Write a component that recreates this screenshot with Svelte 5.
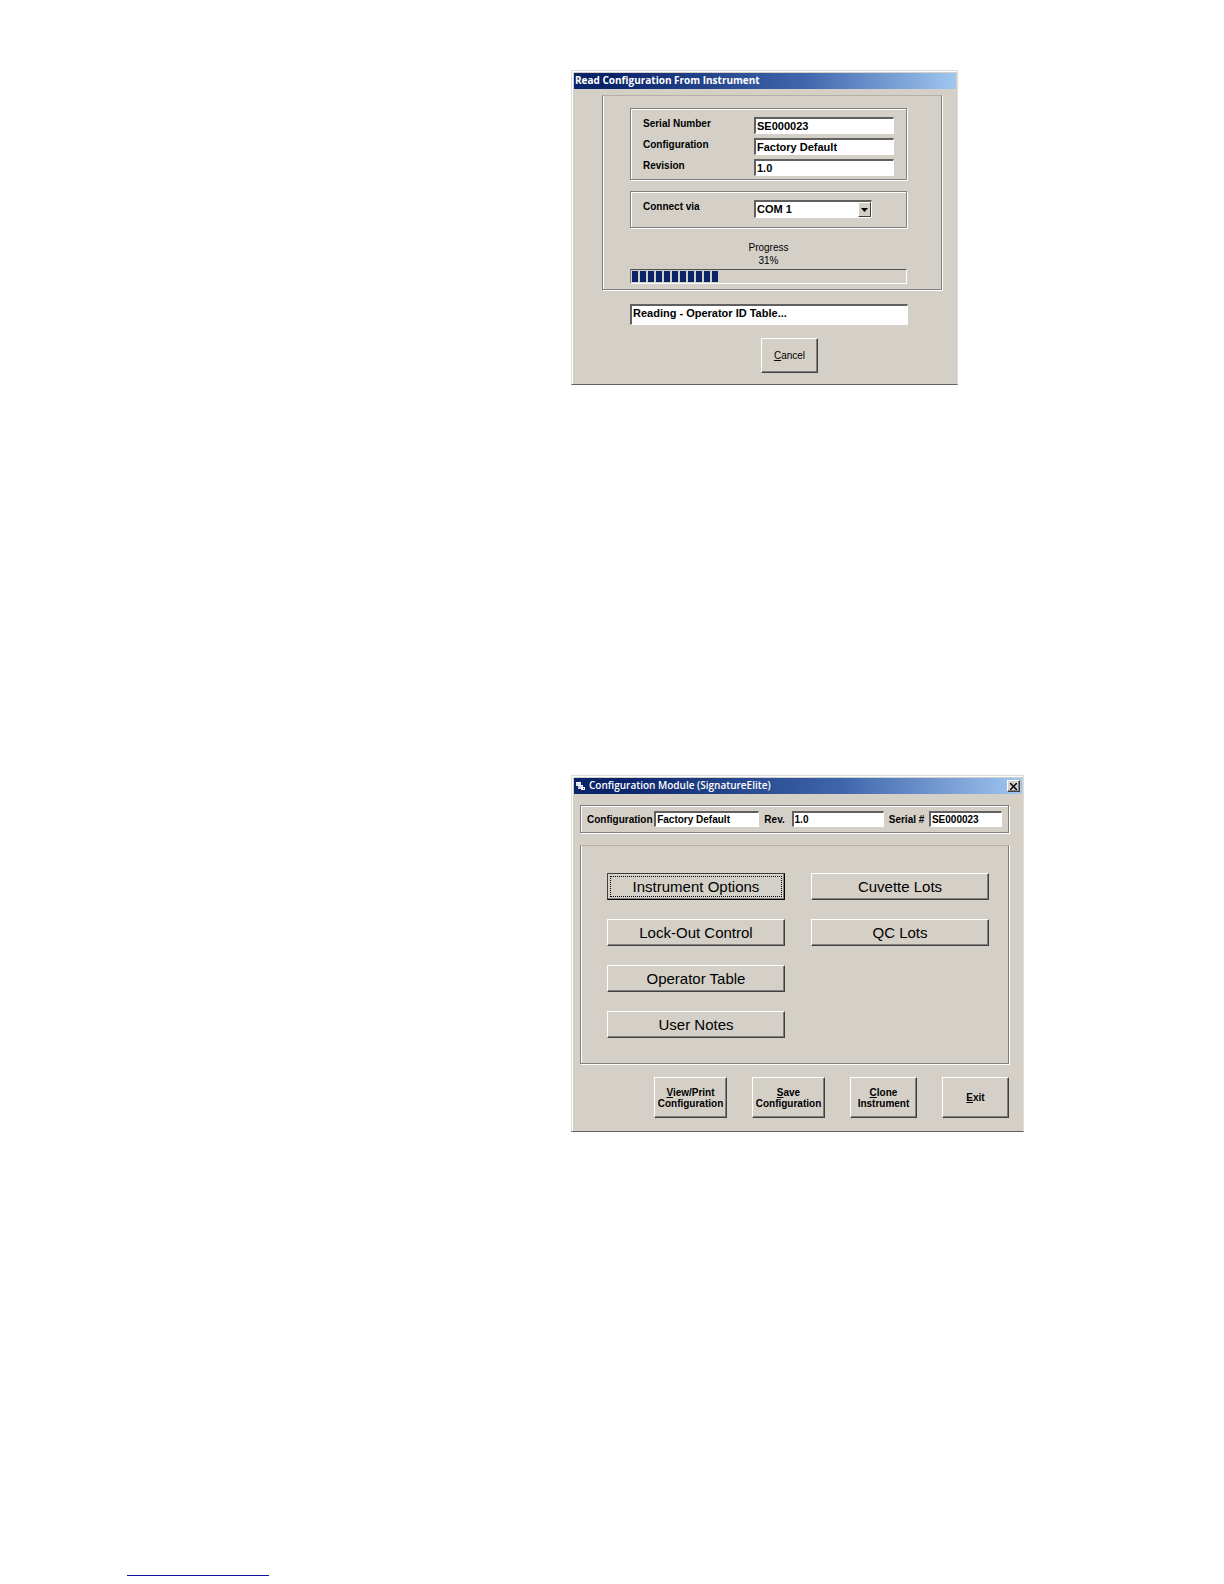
<script lang="ts">
  let instrument = $state({
    serial: "SE000023",
    configuration: "Factory Default",
    revision: "1.0",
  });

  let port = $state("COM 1");
  let status = $state("Reading - Operator ID Table...");
  let percent = $state(31);

  // the bar has room for 35 blocks
  let blocks = $derived(Math.round((percent / 100) * 35));

  const leftButtons = [
    "Instrument Options",
    "Lock-Out Control",
    "Operator Table",
    "User Notes",
  ];
  const rightButtons = ["Cuvette Lots", "QC Lots"];
</script>

<main>
  <section class="window read-window">
    <header>
      <h2>Read Configuration From Instrument</h2>
    </header>
    <div class="read-body">
      <div class="group faint-top read-group">
        <div class="group details">
          <label for="serial">Serial Number</label>
          <input id="serial" type="text" bind:value={instrument.serial} />
          <label for="config">Configuration</label>
          <input id="config" type="text" bind:value={instrument.configuration} />
          <label for="revision">Revision</label>
          <input id="revision" type="text" bind:value={instrument.revision} />
        </div>

        <div class="group connect">
          <label for="port">Connect via</label>
          <div class="select-box">
            <select id="port" bind:value={port}>
              <option>COM 1</option>
              <option>COM 2</option>
            </select>
            <span class="arrow" aria-hidden="true">
              <svg width="7" height="4" viewBox="0 0 7 4">
                <path d="M0 0h7L3.5 4z" fill="#000" />
              </svg>
            </span>
          </div>
        </div>

        <div class="progress-text">
          <div>Progress</div>
          <div>{percent}%</div>
        </div>
        <div
          class="bar"
          role="progressbar"
          aria-label="Progress"
          aria-valuenow={percent}
          aria-valuemin="0"
          aria-valuemax="100"
        >
          {#each { length: blocks } as _}
            <span></span>
          {/each}
        </div>
      </div>

      <input class="status" type="text" aria-label="Status" bind:value={status} />
      <button class="cancel"><span><u>C</u>ancel</span></button>
    </div>
  </section>

  <section class="window module-window">
    <header>
      <svg width="12" height="10" viewBox="0 0 12 10" aria-hidden="true">
        <path d="M1 1h5v1H1z" fill="#fff" />
        <path d="M1 2h5v3H1z" fill="#dfe6f0" />
        <path d="M3 4h5v1H3z" fill="#fff" />
        <path d="M3 5h5v3H3z" fill="#c8d0dc" />
        <path d="M6 6h4v3H6z" fill="#fff" />
        <path d="M8 7h1v1H8z" fill="#444" />
      </svg>
      <h2>Configuration Module (SignatureElite)</h2>
      <button class="close" aria-label="Close">
        <svg width="7" height="7" viewBox="0 0 7 7">
          <path d="M0 0L7 7M7 0L0 7" stroke="#000" stroke-width="1.5" />
        </svg>
      </button>
    </header>
    <div class="module-body">
      <div class="group info">
        <label for="m-config">Configuration</label>
        <input id="m-config" type="text" bind:value={instrument.configuration} />
        <label for="m-rev">Rev.</label>
        <input id="m-rev" type="text" bind:value={instrument.revision} />
        <label for="m-serial">Serial #</label>
        <input id="m-serial" type="text" bind:value={instrument.serial} />
      </div>

      <div class="group faint-top menu">
        <div class="column">
          {#each leftButtons as text, i}
            <button class="big" class:focused={i === 0}>{text}</button>
          {/each}
        </div>
        <div class="column">
          {#each rightButtons as text}
            <button class="big">{text}</button>
          {/each}
        </div>
      </div>

      <div class="actions">
        <button class="wide"><span><u>V</u>iew/Print<br />Configuration</span></button>
        <button class="wide"><span><u>S</u>ave<br />Configuration</span></button>
        <button><span><u>C</u>lone<br />Instrument</span></button>
        <button><span><u>E</u>xit</span></button>
      </div>
    </div>
  </section>

  <hr />
</main>

<style>
  :global(body) {
    margin: 0;
    background: #fff;
  }

  main {
    box-sizing: border-box;
    min-height: 100vh;
    padding: 70px 0 8px;
    display: flex;
    flex-direction: column;
    font-family: "Liberation Sans", Arial, sans-serif;
    font-size: 11px;
    line-height: 13px;
    color: #000;
  }

  .window {
    box-sizing: border-box;
    width: 50%;
    margin-left: 46.65%;
    padding: 2px 1px 0 2px;
    background: #d4d0c8;
    border: 1px solid #dedbd6;
    border-bottom-color: #606060;
    box-shadow: inset 1px 1px 0 #fff;
  }

  .read-window {
    max-width: 387px;
  }

  .module-window {
    max-width: 453px;
    margin-top: 390px;
  }

  header {
    display: flex;
    align-items: center;
    height: 16px;
    padding: 0 2px 0 1px;
    background: linear-gradient(to right, #0a246a 10%, #3f66ac 60%, #a0c6f0);
  }

  h2 {
    flex: 1;
    margin: 0;
    font-family: "Open Sans", sans-serif;
    font-size: 10px;
    font-weight: 700;
    line-height: 14px;
    height: 16px;
    color: #fff;
    white-space: nowrap;
  }

  .module-window h2 {
    font-weight: 600;
  }

  header > svg {
    margin-right: 2px;
  }

  .close {
    width: 13px;
    height: 12px;
  }

  .group {
    box-sizing: border-box;
    border: 1px solid #808080;
    box-shadow:
      1px 1px 0 #fff,
      inset 1px 1px 0 #fff;
  }

  .faint-top {
    border-top-color: #b4b0a8;
    box-shadow:
      1px 1px 0 #fff,
      inset 1px 0 0 #fff;
  }

  label {
    font-size: 10px;
    font-weight: bold;
    white-space: nowrap;
  }

  input,
  select {
    box-sizing: border-box;
    width: 100%;
    min-width: 0;
    height: 17px;
    margin: 0;
    padding: 0 1px 1px;
    font: bold 11px "Liberation Sans", Arial, sans-serif;
    color: #000;
    background: #fff;
    border: 2px solid;
    border-color: #606060 #fff #fff #606060;
    border-right-width: 1px;
    border-bottom-width: 1px;
    border-radius: 0;
    outline: none;
  }

  button {
    box-sizing: border-box;
    display: flex;
    align-items: center;
    justify-content: center;
    padding: 0;
    font: inherit;
    color: #000;
    background: #d4d0c8;
    border: 1px solid;
    border-color: #fff #404040 #404040 #fff;
    border-radius: 0;
    box-shadow: inset -1px -1px 0 #808080;
  }

  u {
    text-underline-offset: 1px;
  }

  /* Read configuration dialog */
  .read-body {
    display: flex;
    flex-direction: column;
    padding: 6px 14px 11px 28px;
  }

  .read-group {
    display: flex;
    flex-direction: column;
    height: 195px;
    padding: 12px 34px 0 27px;
  }

  .details {
    display: grid;
    grid-template-columns: 1fr 140px;
    row-gap: 4px;
    padding: 8px 12px 3px;
  }

  .connect {
    display: grid;
    grid-template-columns: 1fr 140px;
    height: 37px;
    margin-top: 11px;
    padding: 8px 12px;
  }

  .select-box {
    position: relative;
    width: 118px;
  }

  select {
    height: 18px;
    appearance: none;
  }

  .arrow {
    position: absolute;
    top: 2px;
    right: 1px;
    box-sizing: border-box;
    display: flex;
    align-items: center;
    justify-content: center;
    width: 13px;
    height: 15px;
    background: #d4d0c8;
    border: 1px solid;
    border-color: #fff #404040 #404040 #fff;
    pointer-events: none;
  }

  .progress-text {
    margin: 13px 0 2px;
    text-align: center;
    font-size: 10px;
  }

  .bar {
    box-sizing: border-box;
    display: flex;
    gap: 2px;
    height: 15px;
    padding: 1px;
    border: 1px solid;
    border-color: #505050 #fff #fff #808080;
  }

  .bar span {
    width: 6px;
    background: #0a246a;
  }

  .status {
    width: auto;
    height: 21px;
    margin: 14px 34px 0 28px;
    padding-bottom: 4px;
  }

  .cancel {
    align-self: center;
    width: 57px;
    height: 35px;
    margin: 13px 0 0 35px;
    font-size: 10px;
  }

  /* Configuration module */
  .module-body {
    padding: 11px 13px 13px 6px;
  }

  .info {
    display: grid;
    grid-template-columns: 62px 105px 22px 92px 35px 73px;
    column-gap: 4px;
    align-items: center;
    justify-content: space-between;
    height: 28px;
    padding: 0 6px;
  }

  .info input {
    height: 16px;
    font-size: 10px;
  }

  .menu {
    display: grid;
    grid-template-columns: 1fr 1fr;
    column-gap: 26px;
    height: 219px;
    margin-top: 12px;
    padding: 27px 19px 0 26px;
  }

  .column {
    display: flex;
    flex-direction: column;
    gap: 19px;
  }

  .big {
    height: 27px;
    font-size: 15px;
  }

  .focused {
    border-color: #404040 #000 #000 #404040;
    outline: 1px dotted #000;
    outline-offset: -4px;
  }

  .actions {
    display: flex;
    justify-content: flex-end;
    gap: 25px;
    margin-top: 13px;
  }

  .actions button {
    width: 67px;
    height: 41px;
    font-size: 10px;
    font-weight: bold;
    line-height: 11px;
  }

  .actions .wide {
    width: 73px;
  }

  hr {
    width: 142px;
    height: 1px;
    margin: auto 0 0 127px;
    border: 0;
    background: #1414a0;
  }
</style>
